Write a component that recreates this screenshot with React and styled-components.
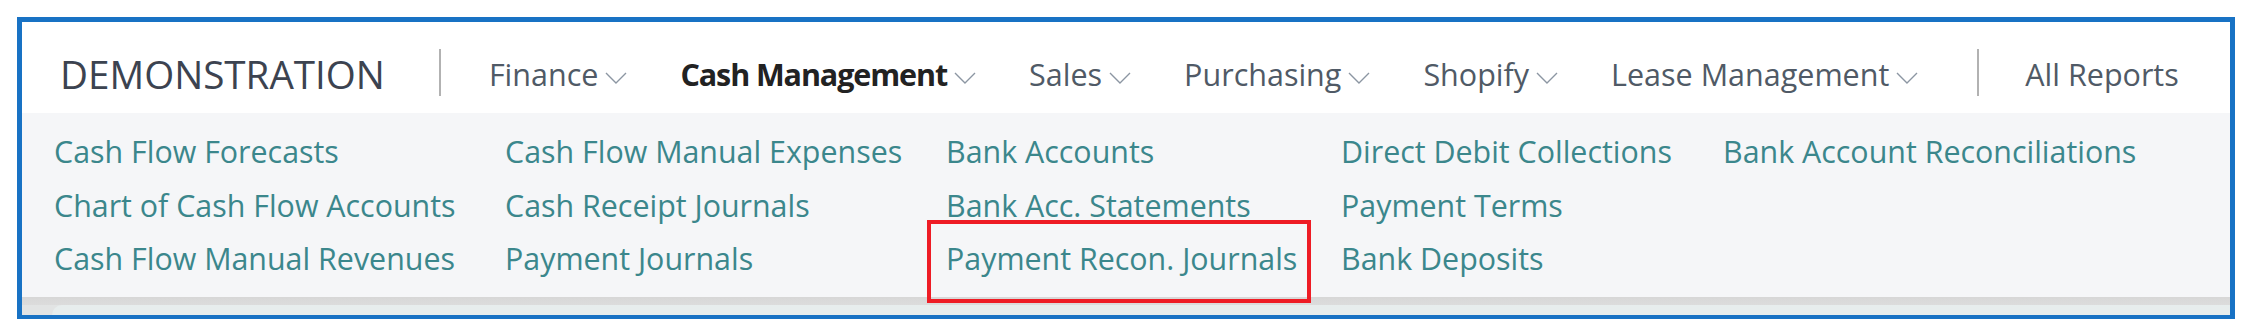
import React from "react";
import styled, { createGlobalStyle } from "styled-components";

const GlobalStyle = createGlobalStyle`
  html, body { margin: 0; padding: 0; background: #ffffff; }
  body { font-family: "Open Sans", "Noto Sans", sans-serif; }
`;

const Frame = styled.div`
  margin: 17px 0 0 17px;
  width: 2218px;
  box-sizing: border-box;
  border: 5px solid #1872c4;
  border-bottom-width: 4px;
  display: flex;
  flex-direction: column;
  overflow: hidden;
`;

const Header = styled.header`
  height: 91px;
  box-sizing: border-box;
  padding: 14px 0 0 38px;
  display: flex;
  align-items: center;
  gap: 53px;
  background: #ffffff;
  white-space: nowrap;
  overflow: hidden;
`;

const Brand = styled.div`
  font-size: 38.6px;
  line-height: 1;
  color: #3c4350;
  margin-right: 1px;
`;

const Divider = styled.span`
  flex: none;
  width: 2px;
  height: 47px;
  margin-bottom: 4px;
  margin-left: ${(p) => p.$ml || 0}px;
  margin-right: ${(p) => p.$mr || 0}px;
  background: #b2b2b2;
`;

const NavItem = styled.div`
  display: inline-flex;
  align-items: center;
  font-size: 30.5px;
  line-height: 1;
  font-weight: ${(p) => (p.$active ? 700 : 400)};
  letter-spacing: ${(p) => (p.$active ? "-1.1px" : "0")};
  color: ${(p) => (p.$active ? "#222222" : "#505a66")};
`;

const Chevron = styled.svg`
  width: 22px;
  height: 12px;
  margin-left: 7px;
  margin-top: 7px;
  flex: none;
`;

const Menu = styled.nav`
  height: 184px;
  box-sizing: border-box;
  padding: 12px 0 0 32px;
  background: #f5f6f8;
  display: grid;
  grid-template-columns: 451px 441px 395px 382px auto;
`;

const Column = styled.div`
  display: flex;
  flex-direction: column;
`;

const MenuLink = styled.a`
  position: relative;
  display: block;
  font-size: 30.4px;
  line-height: 53.5px;
  height: 53.5px;
  color: #3b878c;
  white-space: nowrap;
  text-decoration: none;
  cursor: pointer;

  ${(p) =>
    p.$highlighted &&
    `
    &::after {
      content: "";
      position: absolute;
      left: -19px;
      top: -12px;
      width: 384px;
      height: 83px;
      box-sizing: border-box;
      border: 4px solid #ee1c25;
      pointer-events: none;
    }
  `}
`;

const Band = styled.div`
  height: 18px;
  box-sizing: border-box;
  padding: 8px 0 0 30px;
  background: linear-gradient(to bottom, #d7d7d7 0, #dcdcdc 8px, #e2e4e4 8px);
`;

const PageCard = styled.div`
  height: 100%;
  background: #e7eded;
  border-top-left-radius: 10px;
`;

const navItems = [
  { label: "Finance" },
  { label: "Cash Management", active: true },
  { label: "Sales" },
  { label: "Purchasing" },
  { label: "Shopify" },
  { label: "Lease Management" },
];

const columns = [
  ["Cash Flow Forecasts", "Chart of Cash Flow Accounts", "Cash Flow Manual Revenues"],
  ["Cash Flow Manual Expenses", "Cash Receipt Journals", "Payment Journals"],
  ["Bank Accounts", "Bank Acc. Statements", "Payment Recon. Journals"],
  ["Direct Debit Collections", "Payment Terms", "Bank Deposits"],
  ["Bank Account Reconciliations"],
];

const highlighted = "Payment Recon. Journals";

function ChevronIcon() {
  return (
    <Chevron viewBox="0 0 22 12" fill="none">
      <path d="M1 1 L11 11 L21 1" stroke="#8c96a2" strokeWidth="1.4" strokeLinejoin="miter" />
    </Chevron>
  );
}

export default function App() {
  return (
    <>
      <GlobalStyle />
      <Frame>
        <Header>
          <Brand>DEMONSTRATION</Brand>
          <Divider $mr={-5} />
          {navItems.map((item) => (
            <NavItem key={item.label} $active={item.active}>
              {item.label}
              <ChevronIcon />
            </NavItem>
          ))}
          <Divider $ml={6} $mr={-7} />
          <NavItem>All Reports</NavItem>
          <Divider $ml={1} />
        </Header>
        <Menu>
          {columns.map((col, i) => (
            <Column key={i}>
              {col.map((label) => (
                <MenuLink key={label} $highlighted={label === highlighted}>
                  {label}
                </MenuLink>
              ))}
            </Column>
          ))}
        </Menu>
        <Band>
          <PageCard />
        </Band>
      </Frame>
    </>
  );
}
